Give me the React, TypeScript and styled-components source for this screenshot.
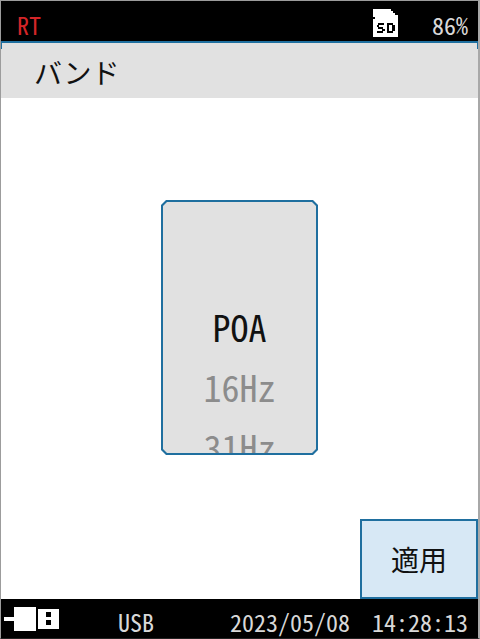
import React, { useState } from "react";
import styled, { createGlobalStyle } from "styled-components";

const BLUE = "#1f6f9f";
const GREY = "#e1e1e1";

const GlobalStyle = createGlobalStyle`
  *, *::before, *::after { box-sizing: border-box; }
  html, body { margin: 0; }
  body {
    background: #fff;
    font-family: "Noto Sans CJK JP", "Noto Sans", sans-serif;
    font-size: 24px;
    line-height: 32px;
    color: #111;
  }
  button { font: inherit; color: inherit; }
`;

const Screen = styled.div`
  min-height: 100vh;
  display: flex;
  flex-direction: column;
  border: 1px solid #9c9c9c;
  border-right: 2px solid #a8a8a8;
  border-bottom-color: #222;
  background: #fff;
`;

const Bar = styled.header`
  display: flex;
  align-items: center;
  height: 40px;
  flex-shrink: 0;
  background: #000;
  color: #d8d8d8;
  font-feature-settings: "hwid" 1;
  white-space: pre;
`;

const TopBar = styled(Bar)`
  padding: 8px 10px 0 16px;
`;

const BottomBar = styled(Bar)`
  height: 39px;
  padding: 6px 10px 0 3px;
`;

const Mode = styled.span`
  color: #d42528;
  margin-right: auto;
`;

const Battery = styled.span`
  margin-left: 34px;
`;

const Source = styled.span`
  margin-left: 59px;
  margin-right: auto;
`;

const Clock = styled.time`
  display: flex;
  gap: 22px;
`;

const TitleBar = styled.div`
  position: relative;
  height: 57px;
  flex-shrink: 0;
  padding: 9px 33px 0;
  border-top: 2px solid ${BLUE};
  background: ${GREY};

  &::before, &::after {
    content: "";
    position: absolute;
    top: 0;
    width: 1px;
    height: 6px;
    background: ${BLUE};
  }
  &::before { left: 0; }
  &::after { right: 0; }
`;

const Title = styled.h1`
  margin: 0;
  font-size: 28px;
  line-height: 40px;
  font-weight: 400;
`;

const Content = styled.main`
  flex: 1;
  display: flex;
  flex-direction: column;
  align-items: center;
  padding-top: 102px;
`;

const PickerFrame = styled.div`
  width: 157px;
  height: 255px;
  padding: 2px;
  background: ${BLUE};
  clip-path: polygon(5px 0, calc(100% - 5px) 0, 100% 5px, 100% calc(100% - 5px),
    calc(100% - 5px) 100%, 5px 100%, 0 calc(100% - 5px), 0 5px);
`;

const PickerList = styled.div`
  height: 100%;
  padding-top: 94px;
  overflow: hidden;
  background: ${GREY};
  clip-path: polygon(4px 0, calc(100% - 4px) 0, 100% 4px, 100% calc(100% - 4px),
    calc(100% - 4px) 100%, 4px 100%, 0 calc(100% - 4px), 0 4px);
`;

const PickerItem = styled.button<{ $selected: boolean }>`
  display: block;
  width: 100%;
  height: 60px;
  padding: 0;
  border: 0;
  background: none;
  font-size: 36px;
  line-height: 60px;
  font-feature-settings: "hwid" 1;
  color: ${(p) => (p.$selected ? "#111" : "#8c8c8c")};
`;

const ApplyButton = styled.button`
  align-self: flex-end;
  margin-top: auto;
  width: 118px;
  height: 80px;
  padding: 0;
  border: 2px solid ${BLUE};
  background: #d7e8f5;
  font-size: 28px;
`;

const SdIcon = () => (
  <svg width="25" height="32" viewBox="0 0 25 32" shapeRendering="crispEdges" role="img" aria-label="SD">
    <path d="M0 0H18V2H20V4H22V6H25V28H0V10H2V8H0Z" fill="#fff" />
    <path
      d="M5 14H11V16H5Z M4 16H6V18H4Z M5 18H10V20H5Z M9 20H12V22H9Z M4 22H10V24H4Z"
      fill="#000"
    />
    <path d="M14 14H20V16H22V22H20V24H14Z M16 16V22H19V16Z" fill="#000" fillRule="evenodd" />
  </svg>
);

const UsbIcon = () => (
  <svg width="55" height="29" viewBox="0 0 55 29" shapeRendering="crispEdges" aria-hidden="true">
    <path d="M0 10H10V0H32V24H10V14H0Z M34 2H55V22H34Z" fill="#fff" />
    <path d="M42 5H47V10H42Z M42 13H47V18H42Z" fill="#000" />
  </svg>
);

const BANDS = ["POA", "16Hz", "31Hz"];

export default function App() {
  const [band, setBand] = useState("POA");
  return (
    <>
      <GlobalStyle />
      <Screen>
        <TopBar>
          <Mode>RT</Mode>
          <SdIcon />
          <Battery>86%</Battery>
        </TopBar>
        <TitleBar>
          <Title id="band-title">バンド</Title>
        </TitleBar>
        <Content>
          <PickerFrame>
            <PickerList role="listbox" aria-labelledby="band-title">
              {BANDS.map((b) => (
                <PickerItem
                  key={b}
                  type="button"
                  role="option"
                  aria-selected={b === band}
                  $selected={b === band}
                  onClick={() => setBand(b)}
                >
                  {b}
                </PickerItem>
              ))}
            </PickerList>
          </PickerFrame>
          <ApplyButton type="button">適用</ApplyButton>
        </Content>
        <BottomBar as="footer">
          <UsbIcon />
          <Source>USB</Source>
          <Clock dateTime="2023-05-08T14:28:13">
            <span>2023/05/08</span>
            <span>14:28:13</span>
          </Clock>
        </BottomBar>
      </Screen>
    </>
  );
}
